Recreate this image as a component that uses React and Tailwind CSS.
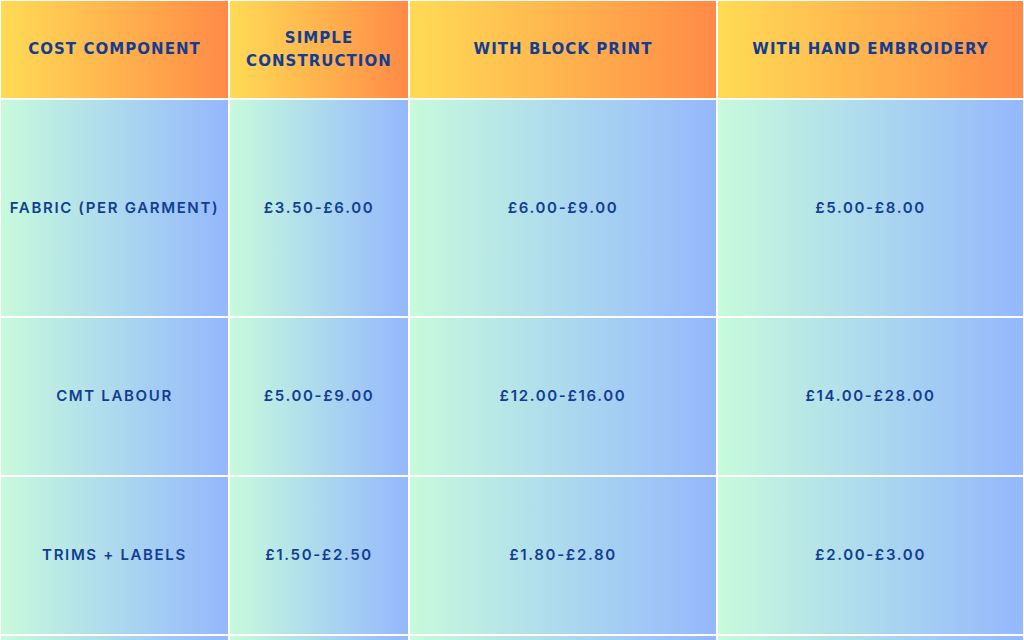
import React from 'react';

const header = ['Cost Component', 'Simple Construction', 'With Block Print', 'With Hand Embroidery'];

const rows = [
    { h: 'h-[216px]', cells: ['Fabric (per garment)', '£3.50-£6.00', '£6.00-£9.00', '£5.00-£8.00'] },
    { h: 'h-[157px]', cells: ['CMT Labour', '£5.00-£9.00', '£12.00-£16.00', '£14.00-£28.00'] },
    { h: 'h-[157px]', cells: ['Trims + Labels', '£1.50-£2.50', '£1.80-£2.80', '£2.00-£3.00'] },
    { h: 'h-[157px]', cells: ['', '', '', ''] },
];

const App = () => {
    return (
        <div className="h-[640px] overflow-hidden bg-white p-px font-['Inter',sans-serif]">
            <div className="grid grid-cols-[227px_178px_306px_305px] gap-[2px]">
                {/* Header row */}
                {header.map((label) => (
                    <div
                        key={label}
                        className="h-[97px] flex items-center justify-center px-4 text-center bg-gradient-to-r from-[#ffdb55] to-[#ff8a47]"
                    >
                        <span className="font-['DejaVu_Sans',sans-serif] font-bold text-[15px] leading-[23px] tracking-[0.07em] uppercase text-[#123d92]">
                            {label}
                        </span>
                    </div>
                ))}

                {/* Body rows */}
                {rows.map((row, r) =>
                    row.cells.map((cell, i) => (
                        <div
                            key={`${r}-${i}`}
                            className={`${row.h} flex items-center justify-center text-center bg-gradient-to-r from-[#c8fadb] to-[#95b7fc]`}
                        >
                            <span className="font-semibold text-[15px] tracking-[0.11em] uppercase text-[#123d92]">
                                {cell}
                            </span>
                        </div>
                    ))
                )}
            </div>
        </div>
    );
};

export default App;
